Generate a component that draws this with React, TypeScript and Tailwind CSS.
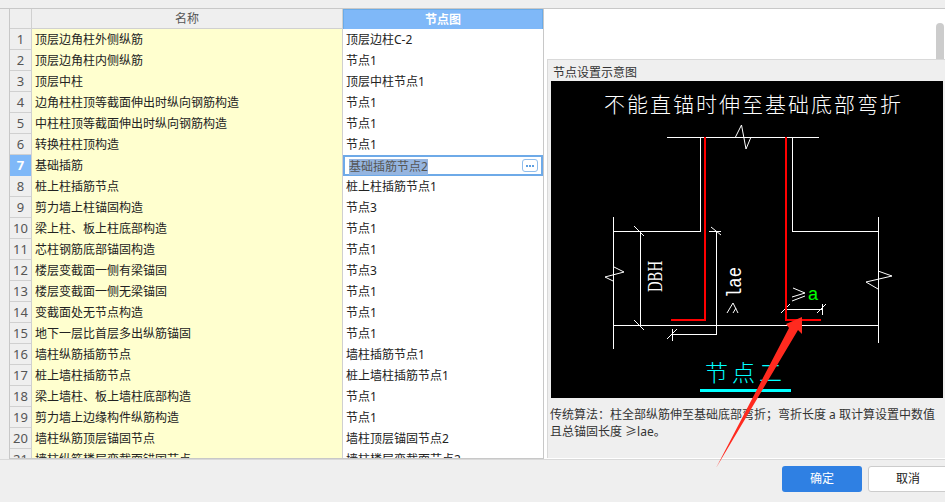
const rows = [
  ["顶层边角柱外侧纵筋", "顶层边柱C-2"],
  ["顶层边角柱内侧纵筋", "节点1"],
  ["顶层中柱", "顶层中柱节点1"],
  ["边角柱柱顶等截面伸出时纵向钢筋构造", "节点1"],
  ["中柱柱顶等截面伸出时纵向钢筋构造", "节点1"],
  ["转换柱柱顶构造", "节点1"],
  ["基础插筋", "基础插筋节点2"],
  ["桩上柱插筋节点", "桩上柱插筋节点1"],
  ["剪力墙上柱锚固构造", "节点3"],
  ["梁上柱、板上柱底部构造", "节点1"],
  ["芯柱钢筋底部锚固构造", "节点1"],
  ["楼层变截面一侧有梁锚固", "节点3"],
  ["楼层变截面一侧无梁锚固", "节点1"],
  ["变截面处无节点构造", "节点1"],
  ["地下一层比首层多出纵筋锚固", "节点1"],
  ["墙柱纵筋插筋节点", "墙柱插筋节点1"],
  ["桩上墙柱插筋节点", "桩上墙柱插筋节点1"],
  ["梁上墙柱、板上墙柱底部构造", "节点1"],
  ["剪力墙上边缘构件纵筋构造", "节点1"],
  ["墙柱纵筋顶层锚固节点", "墙柱顶层锚固节点2"],
  ["墙柱纵筋楼层变截面锚固节点", "墙柱楼层变截面节点2"],
];

function Diagram() {
  return (
    <svg viewBox="551 81 392 317" className="block w-[392px] h-[317px] bg-black" shapeRendering="crispEdges">
      <text x="604" y="112" fill="#fff" fontSize="21" fontWeight="200" letterSpacing="2" fontFamily="'Noto Sans CJK SC', sans-serif">不能直锚时伸至基础底部弯折</text>

      <g stroke="#fff" strokeWidth="1" fill="none">
        <path d="M667 137.5H819M700.5 137V231.5H613.5M792.5 137V231.5H878.5" />
        <path d="M613.5 217V349M878.5 217V343M613 325.5H879" />
        <path d="M640.5 231V325M716.5 231V334.5H672.5M672.5 329V341M709 231.5H721M785 309.5H822.5M822.5 304V315" />
      </g>
      <g stroke="#fff" strokeWidth="1" fill="none" shapeRendering="auto">
        <path d="M735.5 137L741.5 125L746 149L751 137" />
        <path d="M614 267L624 272L605 277L613 281" />
        <path d="M878 271L892 276L866 282L878 289" />
        <path d="M634 226L644 236M634 320L644 330M711 227L721 235M667 339L677 329M781 313L790 304M817 313L826 304" />
        <path d="M793 288L805 293L792 297M792 301L805 296" />
        <path d="M727 313L733 303L738 313M733 313L736 308" />
      </g>

      <path d="M705 137V320H671M786 137V320H821" stroke="#ff0000" strokeWidth="2" fill="none" />

      <text x="662" y="292" fill="#fff" fontSize="21" textLength="31" lengthAdjust="spacingAndGlyphs" fontFamily="'Liberation Serif', serif" transform="rotate(-90 662 292)">DBH</text>
      <text x="741" y="298" fill="#fff" fontSize="20" textLength="31" lengthAdjust="spacingAndGlyphs" fontFamily="'Liberation Mono', monospace" transform="rotate(-90 741 298)">lae</text>
      <text x="808" y="300" fill="#00ff00" fontSize="18" fontFamily="'Liberation Sans', sans-serif">a</text>

      <text x="705" y="381" fill="#00ffff" fontSize="23" fontWeight="200" letterSpacing="4" fontFamily="'Noto Sans CJK SC', sans-serif">节点二</text>
      <rect x="700" y="389" width="91" height="3" fill="#00ffff" />
    </svg>
  );
}

export default function App() {
  return (
    <div className="relative w-[945px] h-[502px] overflow-hidden bg-[#efefef] text-[12px] text-[#222] font-['Noto_Sans','Noto_Sans_CJK_SC',sans-serif]">
      {/* Main area */}
      <div className="mt-2 flex h-[451px] border-t border-[#c8c8c8] pl-[9px]">
        {/* Table */}
        <div className="w-[535px] h-[450px] shrink-0 overflow-hidden border-l border-r border-b border-[#c8c8c8]">
          <div className="grid grid-cols-[22px_311px_1fr] h-5 leading-[18px] pt-px border-b border-[#d0d0d0]">
            <div className="-mt-px border-r border-[#d0d0d0]" />
            <div className="-mt-px pt-px border-r border-[#d0d0d0] text-center text-[#555]">名称</div>
            <div className="-mt-px pt-px bg-[#7fb8f8] border-l border-r border-t border-[#6aabe8] text-center font-bold text-white">节点图</div>
          </div>
          {rows.map((r, i) => {
            const active = i === 6;
            return (
              <div key={i} className="grid grid-cols-[22px_311px_1fr] h-[21px] leading-[20px] border-b border-[#d0d0d0]">
                <div className={`border-r border-[#d0d0d0] text-center text-[13px] ${active ? "bg-[#7fb8f8] text-white font-bold" : "text-[#555]"}`}>
                  {i + 1}
                </div>
                <div className="bg-[#ffffcf] border-r border-[#d0d0d0] pl-[3px] pt-px whitespace-nowrap">{r[0]}</div>
                {active ? (
                  <div className="-mb-px relative z-10 flex items-center h-[21px] bg-white border-2 border-[#6eaae8] pl-1 pr-[3px]">
                    <span className="mt-[2px] bg-[#95b5e0] text-[#555] leading-[16px]">{r[1]}</span>
                    <span className="ml-auto flex items-center justify-center gap-px w-[16px] h-[13px] rounded-[3px] border border-[#8fbdec] bg-white">
                      <i className="w-[2px] h-[2px] bg-[#5f9fe0]" />
                      <i className="w-[2px] h-[2px] bg-[#5f9fe0]" />
                      <i className="w-[2px] h-[2px] bg-[#5f9fe0]" />
                    </span>
                  </div>
                ) : (
                  <div className="bg-white pl-[3px] pt-px whitespace-nowrap">{r[1]}</div>
                )}
              </div>
            );
          })}
        </div>

        {/* Right side */}
        <div className="relative flex-1 bg-white pl-[3px] pt-[50px]">
          <div className="absolute right-[1px] top-[14px] w-2 h-9 rounded-t-full bg-[#cccccc]" />
          <div className="h-[399px] bg-[#efefef] border-l border-t border-[#d9d9d9] pl-[2px]">
            <div className="h-[21px] leading-[25px] pl-[3px] text-[#333]">节点设置示意图</div>
            <div className="ml-px">
              <Diagram />
            </div>
            <p className="mt-2 w-[392px] leading-[17px] text-[#333]">
              传统算法：柱全部纵筋伸至基础底部弯折；弯折长度 a 取计算设置中数值且总锚固长度 ≥lae。
            </p>
          </div>
        </div>
      </div>

      {/* Footer */}
      <div className="flex gap-[6px] pl-[782px] pt-[6px] border-t border-[#d9d9d9]">
        <button className="w-20 h-[26px] shrink-0 rounded-[3px] bg-[#2f80e3] text-white">确定</button>
        <button className="w-20 h-[26px] shrink-0 rounded-[3px] bg-white border border-[#cccccc] text-[#222]">取消</button>
      </div>

      {/* Red annotation arrow */}
      <svg viewBox="0 0 945 502" className="absolute inset-0 w-[945px] h-[502px] pointer-events-none">
        <polygon points="716,468 789,328 786,324 802,317 802,334 798,330" fill="#ff2a1f" />
      </svg>
    </div>
  );
}
